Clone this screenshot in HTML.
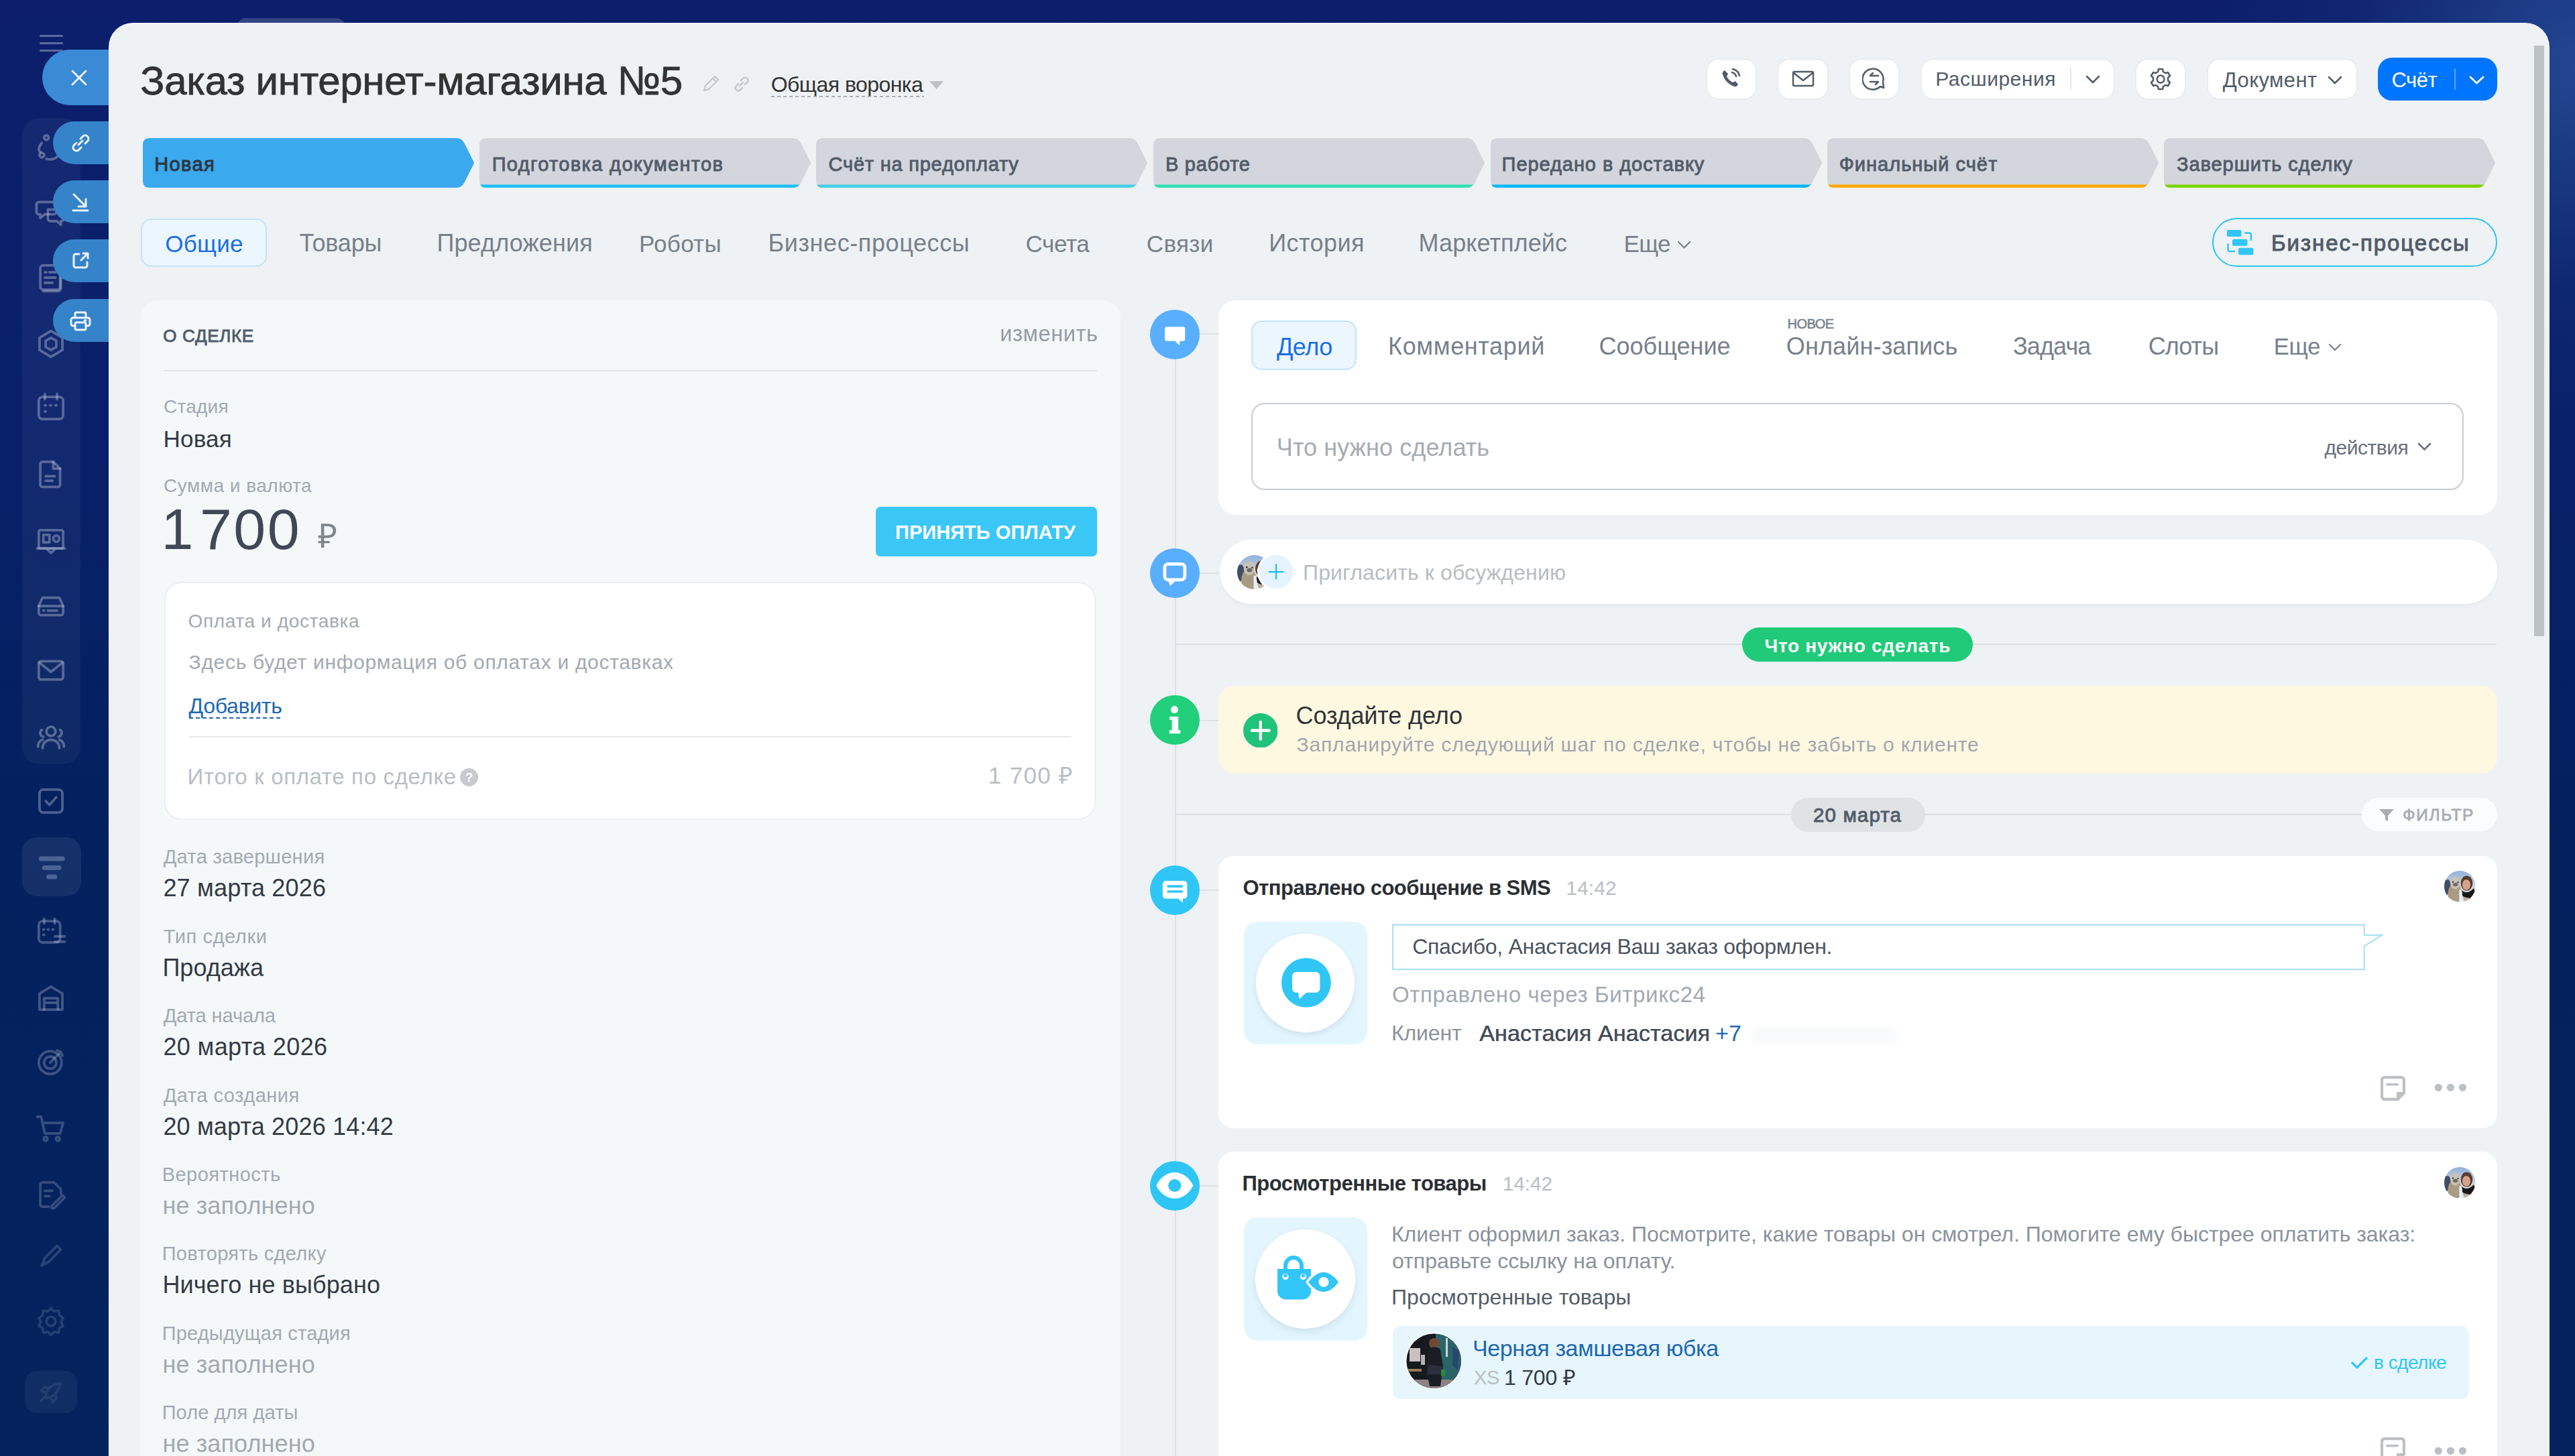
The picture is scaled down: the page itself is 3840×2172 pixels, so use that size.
<!DOCTYPE html>
<html><head><meta charset="utf-8"><style>
html,body{margin:0;padding:0;width:3840px;height:2172px;overflow:hidden;}
body{position:relative;font-family:"Liberation Sans", sans-serif;background:#0b1f6c;}
.t{position:absolute;white-space:pre;}
</style></head><body>
<div style="position:absolute;left:0.0px;top:0.0px;width:3840.0px;height:2172.0px;background:linear-gradient(180deg,#0c1e6c 0%,#08206a 28%,#04215f 55%,#04235c 100%);"></div>
<div style="position:absolute;left:3000.0px;top:0.0px;width:840.0px;height:1000.0px;background:radial-gradient(ellipse 560px 560px at 100% 10%,rgba(60,110,180,0.5),rgba(40,80,150,0.15) 60%,rgba(0,0,0,0) 100%);"></div>
<div style="position:absolute;left:353.0px;top:27.0px;width:162.0px;height:33.0px;background:rgba(255,255,255,0.16);border-radius:14px 14px 0 0;"></div>
<div style="position:absolute;left:59.0px;top:51.5px;width:35.0px;height:3.0px;background:rgba(200,210,235,0.42);border-radius:2px;"></div>
<div style="position:absolute;left:59.0px;top:62.5px;width:35.0px;height:3.0px;background:rgba(200,210,235,0.42);border-radius:2px;"></div>
<div style="position:absolute;left:59.0px;top:73.5px;width:35.0px;height:3.0px;background:rgba(200,210,235,0.42);border-radius:2px;"></div>
<div style="position:absolute;left:33.0px;top:176.0px;width:87.0px;height:964.0px;background:rgba(255,255,255,0.045);border-radius:26px;"></div>
<div style="position:absolute;left:33.0px;top:1249.0px;width:87.5px;height:88.0px;background:rgba(255,255,255,0.07);border-radius:22px;"></div>
<div style="position:absolute;left:37.0px;top:2045.0px;width:78.0px;height:63.0px;background:rgba(255,255,255,0.05);border-radius:18px;"></div>
<svg style="position:absolute;left:51.0px;top:195.0px;" width="50.0" height="50.0" viewBox="-2 -2 44 44" fill="none"><g stroke="rgba(195,202,220,0.400)" stroke-width="3.3" stroke-linecap="round" stroke-linejoin="round" fill="none"><circle cx="14" cy="7" r="3"/><circle cx="8" cy="30" r="3"/><path d="M8 14 C3 20 4 24 6 26"/><path d="M14 35 C22 37 28 34 32 28"/></g></svg>
<svg style="position:absolute;left:51.0px;top:290.0px;" width="50.0" height="50.0" viewBox="-2 -2 44 44" fill="none"><g stroke="rgba(195,202,220,0.400)" stroke-width="3.3" stroke-linecap="round" stroke-linejoin="round" fill="none"><path d="M4 8 h20 a3 3 0 0 1 3 3 v10 a3 3 0 0 1-3 3 h-12 l-6 5 v-5 h-2 a3 3 0 0 1-3-3 v-10 a3 3 0 0 1 3-3z"/><path d="M16 18 h18 a3 3 0 0 1 3 3 v9 a3 3 0 0 1-3 3 h-1 v5 l-5-5 h-9 a3 3 0 0 1-3-3z"/></g></svg>
<svg style="position:absolute;left:51.0px;top:389.0px;" width="50.0" height="50.0" viewBox="-2 -2 44 44" fill="none"><g stroke="rgba(195,202,220,0.400)" stroke-width="3.3" stroke-linecap="round" stroke-linejoin="round" fill="none"><rect x="6" y="4" width="26" height="32" rx="4"/><path d="M12 13h2M18 13h8M12 20h14M12 27h10"/><path d="M33 12v22a4 4 0 0 1-4 4H10"/></g></svg>
<svg style="position:absolute;left:51.0px;top:488.0px;" width="50.0" height="50.0" viewBox="-2 -2 44 44" fill="none"><g stroke="rgba(195,202,220,0.400)" stroke-width="3.3" stroke-linecap="round" stroke-linejoin="round" fill="none"><path d="M20 3 L35 12 V28 L20 37 L5 28 V12Z"/><path d="M20 12 L27 16 V24 L20 28 L13 24 V16Z"/></g></svg>
<svg style="position:absolute;left:51.0px;top:582.0px;" width="50.0" height="50.0" viewBox="-2 -2 44 44" fill="none"><g stroke="rgba(195,202,220,0.400)" stroke-width="3.3" stroke-linecap="round" stroke-linejoin="round" fill="none"><rect x="4" y="7" width="32" height="29" rx="5"/><path d="M12 3v7M28 3v7"/><path d="M12 18h1M19 18h1M26 18h1M12 26h1"/></g></svg>
<svg style="position:absolute;left:51.0px;top:682.0px;" width="50.0" height="50.0" viewBox="-2 -2 44 44" fill="none"><g stroke="rgba(195,202,220,0.400)" stroke-width="3.3" stroke-linecap="round" stroke-linejoin="round" fill="none"><path d="M9 4h14l9 9v21a3 3 0 0 1-3 3H9a3 3 0 0 1-3-3V7a3 3 0 0 1 3-3z"/><path d="M23 4v9h9M13 23h12M13 29h9"/></g></svg>
<svg style="position:absolute;left:51.0px;top:783.0px;" width="50.0" height="50.0" viewBox="-2 -2 44 44" fill="none"><g stroke="rgba(195,202,220,0.400)" stroke-width="3.3" stroke-linecap="round" stroke-linejoin="round" fill="none"><rect x="4" y="5" width="32" height="24" rx="2"/><path d="M2 29h36M14 29l6 6 6-6"/><rect x="10" y="11" width="8" height="10"/><circle cx="27" cy="16" r="4"/></g></svg>
<svg style="position:absolute;left:51.0px;top:879.0px;" width="50.0" height="50.0" viewBox="-2 -2 44 44" fill="none"><g stroke="rgba(195,202,220,0.400)" stroke-width="3.3" stroke-linecap="round" stroke-linejoin="round" fill="none"><path d="M4 20 L9 9 h22 l5 11 v9 a3 3 0 0 1-3 3 H7 a3 3 0 0 1-3-3z"/><path d="M4 20h32M10 26h1M16 26h12"/></g></svg>
<svg style="position:absolute;left:51.0px;top:975.0px;" width="50.0" height="50.0" viewBox="-2 -2 44 44" fill="none"><g stroke="rgba(195,202,220,0.400)" stroke-width="3.3" stroke-linecap="round" stroke-linejoin="round" fill="none"><rect x="4" y="8" width="32" height="24" rx="3"/><path d="M5 10 L20 22 L35 10"/></g></svg>
<svg style="position:absolute;left:51.0px;top:1074.0px;" width="50.0" height="50.0" viewBox="-2 -2 44 44" fill="none"><g stroke="rgba(195,202,220,0.400)" stroke-width="3.3" stroke-linecap="round" stroke-linejoin="round" fill="none"><circle cx="20" cy="13" r="6"/><path d="M9 35c0-7 5-11 11-11s11 4 11 11"/><path d="M10 20a5 5 0 0 1-2-9M30 20a5 5 0 0 0 2-9M3 33c0-5 3-8 6-9M37 33c0-5-3-8-6-9"/></g></svg>
<svg style="position:absolute;left:51.0px;top:1170.0px;" width="50.0" height="50.0" viewBox="-2 -2 44 44" fill="none"><g stroke="rgba(195,202,220,0.380)" stroke-width="3.3" stroke-linecap="round" stroke-linejoin="round" fill="none"><rect x="5" y="5" width="30" height="30" rx="5"/><path d="M13 20l5 5 9-10"/></g></svg>
<svg style="position:absolute;left:54.0px;top:1271.0px;" width="44.0" height="44.0" viewBox="-2 -2 44 44" fill="none"><path d="M5.2 8 H37.3 M10.3 21.6 H32.2 M16.5 35 H26" stroke="rgba(150,170,210,0.42)" stroke-width="7" stroke-linecap="round" fill="none"/></svg>
<svg style="position:absolute;left:51.0px;top:1365.0px;" width="50.0" height="50.0" viewBox="-2 -2 44 44" fill="none"><g stroke="rgba(195,202,220,0.340)" stroke-width="3.3" stroke-linecap="round" stroke-linejoin="round" fill="none"><rect x="4" y="6" width="28" height="28" rx="5"/><path d="M11 3v6M25 3v6M10 17h1M16 17h1M22 17h1M10 24h1M25 26h13M25 33h13"/></g></svg>
<svg style="position:absolute;left:51.0px;top:1464.0px;" width="50.0" height="50.0" viewBox="-2 -2 44 44" fill="none"><g stroke="rgba(195,202,220,0.320)" stroke-width="3.3" stroke-linecap="round" stroke-linejoin="round" fill="none"><path d="M5 14 L20 5 L35 14 V35 H5Z"/><path d="M11 35V20h18v15M11 26h18"/></g></svg>
<svg style="position:absolute;left:51.0px;top:1559.0px;" width="50.0" height="50.0" viewBox="-2 -2 44 44" fill="none"><g stroke="rgba(195,202,220,0.300)" stroke-width="3.3" stroke-linecap="round" stroke-linejoin="round" fill="none"><circle cx="19" cy="21" r="15"/><circle cx="19" cy="21" r="8"/><path d="M19 21 L33 7M28 5l5 2 2 5"/></g></svg>
<svg style="position:absolute;left:51.0px;top:1658.0px;" width="50.0" height="50.0" viewBox="-2 -2 44 44" fill="none"><g stroke="rgba(195,202,220,0.280)" stroke-width="3.3" stroke-linecap="round" stroke-linejoin="round" fill="none"><path d="M2 5h5l5 22h20l4-14H10"/><circle cx="13" cy="34" r="2.5"/><circle cx="29" cy="34" r="2.5"/></g></svg>
<svg style="position:absolute;left:51.0px;top:1757.0px;" width="50.0" height="50.0" viewBox="-2 -2 44 44" fill="none"><g stroke="rgba(195,202,220,0.260)" stroke-width="3.3" stroke-linecap="round" stroke-linejoin="round" fill="none"><path d="M24 4H9a3 3 0 0 0-3 3v26a3 3 0 0 0 3 3h8M24 4l9 9v6M12 15h10M12 22h6"/><path d="M21 35l14-14 3 3-14 14h-3z"/></g></svg>
<svg style="position:absolute;left:51.0px;top:1847.0px;" width="50.0" height="50.0" viewBox="-2 -2 44 44" fill="none"><g stroke="rgba(195,202,220,0.200)" stroke-width="3.3" stroke-linecap="round" stroke-linejoin="round" fill="none"><path d="M8 34 L12 24 L28 8 L33 13 L17 29 Z"/></g></svg>
<svg style="position:absolute;left:51.0px;top:1946.0px;" width="50.0" height="50.0" viewBox="-2 -2 44 44" fill="none"><g stroke="rgba(195,202,220,0.180)" stroke-width="3.3" stroke-linecap="round" stroke-linejoin="round" fill="none"><circle cx="20" cy="20" r="6"/><path d="M20 3l4 4 6-1 1 6 5 4-3 5 3 5-5 3-1 6-6-1-4 4-4-4-6 1-1-6-5-3 3-5-3-5 5-4 1-6 6 1z"/></g></svg>
<svg style="position:absolute;left:51.0px;top:2052.0px;" width="50.0" height="50.0" viewBox="-2 -2 44 44" fill="none"><g stroke="rgba(195,202,220,0.100)" stroke-width="3.3" stroke-linecap="round" stroke-linejoin="round" fill="none"><path d="M14 28c-3-8 4-18 18-20-2 14-12 21-20 18zM12 26l-5 5M18 14l-6-1-5 5 5 2M26 22l1 6-5 5-2-5"/></g></svg>
<div style="position:absolute;left:63.0px;top:74.0px;width:137.0px;height:83.0px;background:#3a8ad5;border-radius:42px 0 0 42px;"></div>
<svg style="position:absolute;left:106.0px;top:104.0px;" width="24.0" height="24.0" viewBox="0 0 24 24" fill="none"><path d="M2 2L22 22M22 2L2 22" stroke="#fff" stroke-width="2.6" stroke-linecap="round"/></svg>
<div style="position:absolute;left:79.0px;top:181.0px;width:121.0px;height:64.0px;background:#3583c9;border-radius:32px 0 0 32px;"></div>
<div style="position:absolute;left:79.0px;top:269.0px;width:121.0px;height:64.0px;background:#3583c9;border-radius:32px 0 0 32px;"></div>
<div style="position:absolute;left:79.0px;top:357.0px;width:121.0px;height:64.0px;background:#3583c9;border-radius:32px 0 0 32px;"></div>
<div style="position:absolute;left:79.0px;top:446.0px;width:121.0px;height:64.0px;background:#3583c9;border-radius:32px 0 0 32px;"></div>
<svg style="position:absolute;left:104.0px;top:197.0px;" width="32.0" height="32.0" viewBox="0 0 32 32" fill="none"><g stroke="#eef4fb" stroke-width="3" stroke-linecap="round" stroke-linejoin="round" fill="none"><path d="M13 19 L19 13"/><path d="M10 16 L6 20 a5 5 0 0 0 7 7 L17 23"/><path d="M16 10 L20 6 a5 5 0 0 1 7 7 L23 17"/></g></svg>
<svg style="position:absolute;left:104.0px;top:285.0px;" width="32.0" height="32.0" viewBox="0 0 32 32" fill="none"><g stroke="#eef4fb" stroke-width="3" stroke-linecap="round" stroke-linejoin="round" fill="none"><path d="M6 5 L24 23 M24 12 V23 H13 M5 29 H27"/></g></svg>
<svg style="position:absolute;left:104.0px;top:373.0px;" width="32.0" height="32.0" viewBox="0 0 32 32" fill="none"><g stroke="#eef4fb" stroke-width="3" stroke-linecap="round" stroke-linejoin="round" fill="none"><path d="M14 6 H9 a3 3 0 0 0-3 3 V23 a3 3 0 0 0 3 3 H23 a3 3 0 0 0 3-3 V18"/><path d="M17 15 L27 5 M20 5 H27 V12"/></g></svg>
<svg style="position:absolute;left:103.0px;top:462.0px;" width="34.0" height="34.0" viewBox="0 0 34 34" fill="none"><g stroke="#eef4fb" stroke-width="3" stroke-linecap="round" stroke-linejoin="round" fill="none"><path d="M9 12 V6 a2 2 0 0 1 2-2 H23 a2 2 0 0 1 2 2 V12"/><path d="M9 24 H6 a3 3 0 0 1-3-3 V15 a3 3 0 0 1 3-3 H28 a3 3 0 0 1 3 3 V21 a3 3 0 0 1-3 3 H25"/><rect x="9" y="19" width="16" height="11" rx="2"/><path d="M23 16h2"/></g></svg>
<div style="position:absolute;left:162.0px;top:34.0px;width:3640.0px;height:2266.0px;background:#eef2f4;border-radius:36px 36px 0 0;"></div>
<div style="position:absolute;left:3779.0px;top:68.0px;width:15.0px;height:881.0px;background:#bdc2c5;"></div>
<div class="t" style="left:209.2px;top:91.4px;font-size:60px;line-height:60px;color:#333333;font-weight:400;letter-spacing:-0.28px;-webkit-text-stroke:0.8px #333333;">Заказ интернет-магазина №5</div>
<svg style="position:absolute;left:1046.0px;top:111.0px;" width="29.0" height="28.0" viewBox="0 0 29 28" fill="none"><g stroke="#c5c9ce" stroke-width="2.4" fill="none" stroke-linejoin="round"><path d="M4 24 L6 17 L20 3 L25 8 L11 22 Z M17 6 L22 11"/></g></svg>
<svg style="position:absolute;left:1091.0px;top:111.0px;" width="29.0" height="28.0" viewBox="0 0 29 28" fill="none"><g stroke="#c5c9ce" stroke-width="2.6" fill="none" stroke-linecap="round"><path d="M12 17 L17 12"/><path d="M10 14 L6 18 a4.5 4.5 0 0 0 6 6 L16 20"/><path d="M14 9 L18 5 a4.5 4.5 0 0 1 6 6 L20 15"/></g></svg>
<div class="t" style="left:1149.7px;top:110.3px;font-size:32px;line-height:32px;color:#333333;font-weight:400;letter-spacing:-0.56px;">Общая воронка</div>
<div style="position:absolute;left:1150.0px;top:143.0px;width:228.0px;height:2.0px;background-image:linear-gradient(90deg,#a8adb4 55%,transparent 55%);background-size:9px 2px;"></div>
<svg style="position:absolute;left:1386.0px;top:121.0px;" width="21.0" height="12.0" viewBox="0 0 21 12" fill="none"><path d="M0 0 H21 L10.5 12 Z" fill="#bdc1c6"/></svg>
<div style="position:absolute;left:2546.0px;top:88.5px;width:72.0px;height:58.5px;background:#fff;border-radius:17px;box-shadow:0 0 0 1.5px rgba(0,0,0,0.035);"></div>
<div style="position:absolute;left:2652.0px;top:88.5px;width:73.0px;height:58.5px;background:#fff;border-radius:17px;box-shadow:0 0 0 1.5px rgba(0,0,0,0.035);"></div>
<div style="position:absolute;left:2759.0px;top:88.5px;width:72.0px;height:58.5px;background:#fff;border-radius:17px;box-shadow:0 0 0 1.5px rgba(0,0,0,0.035);"></div>
<div style="position:absolute;left:2866.0px;top:88.5px;width:286.0px;height:58.5px;background:#fff;border-radius:17px;box-shadow:0 0 0 1.5px rgba(0,0,0,0.035);"></div>
<div style="position:absolute;left:3186.0px;top:88.5px;width:72.0px;height:58.5px;background:#fff;border-radius:17px;box-shadow:0 0 0 1.5px rgba(0,0,0,0.035);"></div>
<div style="position:absolute;left:3293.0px;top:88.5px;width:221.0px;height:58.5px;background:#fff;border-radius:17px;box-shadow:0 0 0 1.5px rgba(0,0,0,0.035);"></div>
<div style="position:absolute;left:3546.0px;top:85.5px;width:178.0px;height:64.5px;background:#0075ff;border-radius:21px;"></div>
<svg style="position:absolute;left:2566.0px;top:102.0px;" width="30.0" height="30.0" viewBox="0 0 30 30" fill="none"><path d="M6 3 C4 4 2 6 3 9 C5 17 12 24 20 27 C23 28 25 26 26 24 L22 19 L18 21 C14 19 11 16 9 12 L11 8 Z" fill="#525c69"/><g stroke="#525c69" stroke-width="2.5" fill="none" stroke-linecap="round" stroke-linejoin="round"><path d="M17 6 a8 8 0 0 1 6 6 M18 1 a13 13 0 0 1 10 10"/></g></svg>
<svg style="position:absolute;left:2672.0px;top:105.0px;" width="34.0" height="25.0" viewBox="0 0 34 25" fill="none"><g stroke="#525c69" stroke-width="2.5" fill="none" stroke-linecap="round" stroke-linejoin="round"><rect x="2" y="2" width="30" height="21" rx="2"/><path d="M3 4 L17 15 L31 4"/></g></svg>
<svg style="position:absolute;left:2777.0px;top:100.0px;" width="36.0" height="36.0" viewBox="0 0 36 36" fill="none"><g stroke="#525c69" stroke-width="2.5" fill="none" stroke-linecap="round" stroke-linejoin="round"><path d="M32 31 L27 29 A15.5 15.5 0 1 1 31 22 Z"/><path d="M24 13 H12 L16 9 M12 22 H24 L20 26"/></g></svg>
<div class="t" style="left:2886.3px;top:103.0px;font-size:30px;line-height:30px;color:#525c69;font-weight:400;letter-spacing:0.52px;">Расширения</div>
<div style="position:absolute;left:3086.5px;top:102.0px;width:2.0px;height:32.0px;background:#e3e6e9;"></div>
<svg style="position:absolute;left:3110.0px;top:112.0px;" width="22.0" height="14.0" viewBox="0 0 22 14" fill="none"><g stroke="#525c69" stroke-width="2.5" fill="none" stroke-linecap="round" stroke-linejoin="round" stroke-width="2.6"><path d="M2 2 L11 11 L20 2"/></g></svg>
<svg style="position:absolute;left:3203.0px;top:100.0px;" width="38.0" height="36.0" viewBox="0 0 38 36" fill="none"><g stroke="#525c69" stroke-width="2.5" fill="none" stroke-linecap="round" stroke-linejoin="round"><circle cx="19" cy="18" r="5.5"/><path d="M16 3 h6 l1 4 3 2 4-1 3 5 -3 3 v4 l3 3 -3 5 -4-1 -3 2 -1 4 h-6 l-1-4 -3-2 -4 1 -3-5 3-3 v-4 l-3-3 3-5 4 1 3-2z"/></g></svg>
<div class="t" style="left:3314.8px;top:103.5px;font-size:31px;line-height:31px;color:#525c69;font-weight:400;letter-spacing:0.41px;">Документ</div>
<svg style="position:absolute;left:3471.0px;top:113.0px;" width="22.0" height="14.0" viewBox="0 0 22 14" fill="none"><g stroke="#525c69" stroke-width="2.5" fill="none" stroke-linecap="round" stroke-linejoin="round" stroke-width="2.6"><path d="M2 2 L11 11 L20 2"/></g></svg>
<div class="t" style="left:3566.5px;top:103.5px;font-size:31px;line-height:31px;color:#ffffff;font-weight:400;letter-spacing:-0.51px;">Счёт</div>
<div style="position:absolute;left:3659.5px;top:101.5px;width:2.0px;height:32.5px;background:rgba(255,255,255,0.35);"></div>
<svg style="position:absolute;left:3682.0px;top:113.0px;" width="23.0" height="14.0" viewBox="0 0 23 14" fill="none"><path d="M2 2 L11.5 11 L21 2" stroke="#fff" stroke-width="2.8" fill="none" stroke-linecap="round" stroke-linejoin="round"/></svg>
<svg style="position:absolute;left:213.3px;top:206.0px;" width="494.2" height="74.0" viewBox="0 0 494.2 74" fill="none"><path d="M0 10 Q0 0 10 0 H467.2 Q476.2 0 480.2 9 L494.2 37.0 L480.2 65 Q476.2 74 467.2 74 H10 Q0 74 0 64 Z" fill="#3ba9ee"/></svg>
<svg style="position:absolute;left:715.3px;top:206.0px;" width="494.2" height="74.0" viewBox="0 0 494.2 74" fill="none"><path d="M0 10 Q0 0 10 0 H467.2 Q476.2 0 480.2 9 L494.2 37.0 L480.2 65 Q476.2 74 467.2 74 H10 Q0 74 0 64 Z" fill="#d3d6dd"/><clipPath id="sc1"><path d="M0 10 Q0 0 10 0 H467.2 Q476.2 0 480.2 9 L494.2 37.0 L480.2 65 Q476.2 74 467.2 74 H10 Q0 74 0 64 Z"/></clipPath><rect x="0" y="69.4" width="494.2" height="5" fill="#1ec0f4" clip-path="url(#sc1)"/></svg>
<svg style="position:absolute;left:1217.0px;top:206.0px;" width="494.2" height="74.0" viewBox="0 0 494.2 74" fill="none"><path d="M0 10 Q0 0 10 0 H467.2 Q476.2 0 480.2 9 L494.2 37.0 L480.2 65 Q476.2 74 467.2 74 H10 Q0 74 0 64 Z" fill="#d3d6dd"/><clipPath id="sc2"><path d="M0 10 Q0 0 10 0 H467.2 Q476.2 0 480.2 9 L494.2 37.0 L480.2 65 Q476.2 74 467.2 74 H10 Q0 74 0 64 Z"/></clipPath><rect x="0" y="69.4" width="494.2" height="5" fill="#46cfe3" clip-path="url(#sc2)"/></svg>
<svg style="position:absolute;left:1719.6px;top:206.0px;" width="494.2" height="74.0" viewBox="0 0 494.2 74" fill="none"><path d="M0 10 Q0 0 10 0 H467.2 Q476.2 0 480.2 9 L494.2 37.0 L480.2 65 Q476.2 74 467.2 74 H10 Q0 74 0 64 Z" fill="#d3d6dd"/><clipPath id="sc3"><path d="M0 10 Q0 0 10 0 H467.2 Q476.2 0 480.2 9 L494.2 37.0 L480.2 65 Q476.2 74 467.2 74 H10 Q0 74 0 64 Z"/></clipPath><rect x="0" y="69.4" width="494.2" height="5" fill="#2fe1b4" clip-path="url(#sc3)"/></svg>
<svg style="position:absolute;left:2223.0px;top:206.0px;" width="494.2" height="74.0" viewBox="0 0 494.2 74" fill="none"><path d="M0 10 Q0 0 10 0 H467.2 Q476.2 0 480.2 9 L494.2 37.0 L480.2 65 Q476.2 74 467.2 74 H10 Q0 74 0 64 Z" fill="#d3d6dd"/><clipPath id="sc4"><path d="M0 10 Q0 0 10 0 H467.2 Q476.2 0 480.2 9 L494.2 37.0 L480.2 65 Q476.2 74 467.2 74 H10 Q0 74 0 64 Z"/></clipPath><rect x="0" y="69.4" width="494.2" height="5" fill="#00b6f7" clip-path="url(#sc4)"/></svg>
<svg style="position:absolute;left:2725.0px;top:206.0px;" width="494.2" height="74.0" viewBox="0 0 494.2 74" fill="none"><path d="M0 10 Q0 0 10 0 H467.2 Q476.2 0 480.2 9 L494.2 37.0 L480.2 65 Q476.2 74 467.2 74 H10 Q0 74 0 64 Z" fill="#d3d6dd"/><clipPath id="sc5"><path d="M0 10 Q0 0 10 0 H467.2 Q476.2 0 480.2 9 L494.2 37.0 L480.2 65 Q476.2 74 467.2 74 H10 Q0 74 0 64 Z"/></clipPath><rect x="0" y="69.4" width="494.2" height="5" fill="#ffa800" clip-path="url(#sc5)"/></svg>
<svg style="position:absolute;left:3226.6px;top:206.0px;" width="494.2" height="74.0" viewBox="0 0 494.2 74" fill="none"><path d="M0 10 Q0 0 10 0 H467.2 Q476.2 0 480.2 9 L494.2 37.0 L480.2 65 Q476.2 74 467.2 74 H10 Q0 74 0 64 Z" fill="#d3d6dd"/><clipPath id="sc6"><path d="M0 10 Q0 0 10 0 H467.2 Q476.2 0 480.2 9 L494.2 37.0 L480.2 65 Q476.2 74 467.2 74 H10 Q0 74 0 64 Z"/></clipPath><rect x="0" y="69.4" width="494.2" height="5" fill="#7bd400" clip-path="url(#sc6)"/></svg>
<div class="t" style="left:230.3px;top:230.6px;font-size:29px;line-height:29px;color:#2b3540;font-weight:400;letter-spacing:1.35px;-webkit-text-stroke:0.9px #2b3540;">Новая</div>
<div class="t" style="left:733.7px;top:230.6px;font-size:29px;line-height:29px;color:#525c69;font-weight:400;letter-spacing:1.34px;-webkit-text-stroke:0.9px #525c69;">Подготовка документов</div>
<div class="t" style="left:1235.6px;top:230.6px;font-size:29px;line-height:29px;color:#525c69;font-weight:400;letter-spacing:0.78px;-webkit-text-stroke:0.9px #525c69;">Счёт на предоплату</div>
<div class="t" style="left:1738.0px;top:230.6px;font-size:29px;line-height:29px;color:#525c69;font-weight:400;letter-spacing:0.73px;-webkit-text-stroke:0.9px #525c69;">В работе</div>
<div class="t" style="left:2239.6px;top:230.6px;font-size:29px;line-height:29px;color:#525c69;font-weight:400;letter-spacing:0.94px;-webkit-text-stroke:0.9px #525c69;">Передано в доставку</div>
<div class="t" style="left:2742.8px;top:230.6px;font-size:29px;line-height:29px;color:#525c69;font-weight:400;letter-spacing:1.02px;-webkit-text-stroke:0.9px #525c69;">Финальный счёт</div>
<div class="t" style="left:3246.0px;top:230.6px;font-size:29px;line-height:29px;color:#525c69;font-weight:400;letter-spacing:0.93px;-webkit-text-stroke:0.9px #525c69;">Завершить сделку</div>
<div style="position:absolute;left:210.0px;top:325.6px;width:188.0px;height:72.4px;background:#ecf6fe;border:2px solid #c3e3fa;border-radius:16px;box-sizing:border-box;"></div>
<div class="t" style="left:246.3px;top:345.9px;font-size:35px;line-height:35px;color:#1b6fe4;font-weight:400;letter-spacing:0.27px;">Общие</div>
<div class="t" style="left:446.4px;top:345.0px;font-size:36px;line-height:36px;color:#77808b;font-weight:400;letter-spacing:-0.15px;">Товары</div>
<div class="t" style="left:651.4px;top:345.0px;font-size:36px;line-height:36px;color:#77808b;font-weight:400;letter-spacing:0.16px;">Предложения</div>
<div class="t" style="left:953.0px;top:345.9px;font-size:35px;line-height:35px;color:#77808b;font-weight:400;letter-spacing:0.27px;">Роботы</div>
<div class="t" style="left:1145.6px;top:345.0px;font-size:36px;line-height:36px;color:#77808b;font-weight:400;letter-spacing:0.59px;">Бизнес-процессы</div>
<div class="t" style="left:1529.6px;top:345.9px;font-size:35px;line-height:35px;color:#77808b;font-weight:400;letter-spacing:-0.36px;">Счета</div>
<div class="t" style="left:1709.8px;top:345.9px;font-size:35px;line-height:35px;color:#77808b;font-weight:400;letter-spacing:0.36px;">Связи</div>
<div class="t" style="left:1892.2px;top:345.0px;font-size:36px;line-height:36px;color:#77808b;font-weight:400;letter-spacing:0.45px;">История</div>
<div class="t" style="left:2115.6px;top:345.0px;font-size:36px;line-height:36px;color:#77808b;font-weight:400;letter-spacing:0.09px;">Маркетплейс</div>
<div class="t" style="left:2421.5px;top:345.9px;font-size:35px;line-height:35px;color:#77808b;font-weight:400;letter-spacing:-0.62px;">Еще</div>
<svg style="position:absolute;left:2501.0px;top:359.0px;" width="21.0" height="13.0" viewBox="0 0 21 13" fill="none"><path d="M2 2 L10.5 10.5 L19 2" stroke="#77808b" stroke-width="2.2" fill="none" stroke-linecap="round"/></svg>
<div style="position:absolute;left:3298.8px;top:324.8px;width:425.1px;height:73.2px;border:2.2px solid #2ec4f5;border-radius:40px;box-sizing:border-box;"></div>
<svg style="position:absolute;left:3320.0px;top:342.0px;" width="41.0" height="39.0" viewBox="0 0 41 39" fill="none"><g fill="#31c5f6"><rect x="0.7" y="1" width="21.8" height="10" rx="2.5"/><rect x="9" y="14.8" width="22.5" height="10" rx="2.5"/><rect x="18" y="27.8" width="22.4" height="10.4" rx="2.5"/></g><g stroke="#31c5f6" stroke-width="2.6" fill="none"><path d="M27 5.5 H34 a3 3 0 0 1 3 3 V17"/><path d="M2.5 21.5 V30 a3 3 0 0 0 3 3 H13"/></g></svg>
<div class="t" style="left:3387.0px;top:345.5px;font-size:33px;line-height:33px;color:#525c69;font-weight:400;letter-spacing:1.95px;-webkit-text-stroke:1px #525c69;">Бизнес-процессы</div>
<div style="position:absolute;left:208.5px;top:447.7px;width:1462.5px;height:1852.3px;background:#f4f8f9;border-radius:26px;"></div>
<div class="t" style="left:243.3px;top:487.8px;font-size:26px;line-height:26px;color:#525c69;font-weight:400;letter-spacing:0.66px;-webkit-text-stroke:0.9px #525c69;">О СДЕЛКЕ</div>
<div class="t" style="left:1491.2px;top:482.3px;font-size:32.5px;line-height:32.5px;color:#959ca4;font-weight:400;letter-spacing:0.62px;">изменить</div>
<div style="position:absolute;left:244.0px;top:552.0px;width:1392.0px;height:2.0px;background:#e3e7ea;"></div>
<div class="t" style="left:244.0px;top:592.6px;font-size:28px;line-height:28px;color:#a3a9b1;font-weight:400;letter-spacing:0.22px;">Стадия</div>
<div class="t" style="left:243.6px;top:636.8px;font-size:35px;line-height:35px;color:#333a44;font-weight:400;letter-spacing:0.17px;">Новая</div>
<div class="t" style="left:244.0px;top:711.1px;font-size:28px;line-height:28px;color:#a3a9b1;font-weight:400;letter-spacing:0.50px;">Сумма и валюта</div>
<div class="t" style="left:240.6px;top:745.5px;font-size:86px;line-height:86px;color:#414855;font-weight:400;letter-spacing:0.00px;">1</div>
<div class="t" style="left:298.0px;top:745.5px;font-size:86px;line-height:86px;color:#414855;font-weight:400;letter-spacing:2.52px;">700</div>
<div class="t" style="left:474.0px;top:774.7px;font-size:50px;line-height:50px;color:#80868e;font-weight:400;letter-spacing:0.00px;">₽</div>
<div style="position:absolute;left:1305.6px;top:756.2px;width:330.4px;height:73.4px;background:#3bc7f5;border-radius:7px;"></div>
<div class="t" style="left:1335.0px;top:780.0px;font-size:29px;line-height:29px;color:#ffffff;font-weight:700;letter-spacing:0.05px;">ПРИНЯТЬ ОПЛАТУ</div>
<div style="position:absolute;left:245.4px;top:868.0px;width:1388.6px;height:355.4px;background:#fff;border:2px solid #eceff2;border-radius:26px;box-sizing:border-box;"></div>
<div class="t" style="left:280.6px;top:913.1px;font-size:28px;line-height:28px;color:#a3a9b1;font-weight:400;letter-spacing:0.63px;">Оплата и доставка</div>
<div class="t" style="left:281.6px;top:972.6px;font-size:30px;line-height:30px;color:#a3a9b1;font-weight:400;letter-spacing:0.69px;">Здесь будет информация об оплатах и доставках</div>
<div class="t" style="left:281.6px;top:1036.7px;font-size:32px;line-height:32px;color:#2067b0;font-weight:400;letter-spacing:-0.31px;">Добавить</div>
<div style="position:absolute;left:281.6px;top:1070.0px;width:138.6px;height:2.0px;background-image:linear-gradient(90deg,#2067b0 60%,transparent 60%);background-size:10px 2px;"></div>
<div style="position:absolute;left:281.6px;top:1098.0px;width:1316.4px;height:2.0px;background:#e6e9ec;"></div>
<div class="t" style="left:279.6px;top:1141.9px;font-size:33px;line-height:33px;color:#b9bec4;font-weight:400;letter-spacing:0.66px;">Итого к оплате по сделке</div>
<svg style="position:absolute;left:686.0px;top:1146.0px;" width="27.0" height="27.0" viewBox="0 0 27 27" fill="none"><circle cx="13.5" cy="13.5" r="13.5" fill="#c6cacf"/><text x="13.5" y="20" text-anchor="middle" font-family="Liberation Sans" font-weight="700" font-size="19" fill="#fff">?</text></svg>
<div class="t" style="left:1473.8px;top:1139.0px;font-size:35px;line-height:35px;color:#b9bec4;font-weight:400;letter-spacing:1.32px;">1 700 ₽</div>
<div class="t" style="left:243.7px;top:1264.1px;font-size:29px;line-height:29px;color:#a3a9b1;font-weight:400;letter-spacing:0.29px;">Дата завершения</div>
<div class="t" style="left:243.4px;top:1307.2px;font-size:36px;line-height:36px;color:#333a44;font-weight:400;letter-spacing:0.20px;">27 марта 2026</div>
<div class="t" style="left:243.7px;top:1382.6px;font-size:29px;line-height:29px;color:#a3a9b1;font-weight:400;letter-spacing:0.60px;">Тип сделки</div>
<div class="t" style="left:242.4px;top:1425.7px;font-size:36px;line-height:36px;color:#333a44;font-weight:400;letter-spacing:0.06px;">Продажа</div>
<div class="t" style="left:243.7px;top:1501.0px;font-size:29px;line-height:29px;color:#a3a9b1;font-weight:400;letter-spacing:-0.08px;">Дата начала</div>
<div class="t" style="left:243.4px;top:1544.1px;font-size:36px;line-height:36px;color:#333a44;font-weight:400;letter-spacing:0.37px;">20 марта 2026</div>
<div class="t" style="left:243.7px;top:1619.5px;font-size:29px;line-height:29px;color:#a3a9b1;font-weight:400;letter-spacing:0.50px;">Дата создания</div>
<div class="t" style="left:243.4px;top:1662.5px;font-size:36px;line-height:36px;color:#333a44;font-weight:400;letter-spacing:0.17px;">20 марта 2026 14:42</div>
<div class="t" style="left:241.7px;top:1737.9px;font-size:29px;line-height:29px;color:#a3a9b1;font-weight:400;letter-spacing:0.47px;">Вероятность</div>
<div class="t" style="left:242.4px;top:1781.0px;font-size:36px;line-height:36px;color:#a3a9b1;font-weight:400;letter-spacing:0.12px;">не заполнено</div>
<div class="t" style="left:241.7px;top:1856.3px;font-size:29px;line-height:29px;color:#a3a9b1;font-weight:400;letter-spacing:0.33px;">Повторять сделку</div>
<div class="t" style="left:242.4px;top:1899.4px;font-size:36px;line-height:36px;color:#333a44;font-weight:400;letter-spacing:0.12px;">Ничего не выбрано</div>
<div class="t" style="left:241.7px;top:1974.8px;font-size:29px;line-height:29px;color:#a3a9b1;font-weight:400;letter-spacing:0.20px;">Предыдущая стадия</div>
<div class="t" style="left:242.4px;top:2017.9px;font-size:36px;line-height:36px;color:#a3a9b1;font-weight:400;letter-spacing:0.12px;">не заполнено</div>
<div class="t" style="left:241.7px;top:2093.2px;font-size:29px;line-height:29px;color:#a3a9b1;font-weight:400;letter-spacing:0.09px;">Поле для даты</div>
<div class="t" style="left:242.4px;top:2136.3px;font-size:36px;line-height:36px;color:#a3a9b1;font-weight:400;letter-spacing:0.12px;">не заполнено</div>
<div style="position:absolute;left:1752.0px;top:535.0px;width:2.0px;height:1765.0px;background:#dde1e5;"></div>
<div style="position:absolute;left:1788.0px;top:497.0px;width:29.0px;height:2.0px;background:#dde1e5;"></div>
<div style="position:absolute;left:1788.0px;top:854.0px;width:29.0px;height:2.0px;background:#dde1e5;"></div>
<div style="position:absolute;left:1788.0px;top:1073.5px;width:29.0px;height:2.0px;background:#dde1e5;"></div>
<div style="position:absolute;left:1788.0px;top:1326.5px;width:29.0px;height:2.0px;background:#dde1e5;"></div>
<div style="position:absolute;left:1788.0px;top:1767.5px;width:29.0px;height:2.0px;background:#dde1e5;"></div>
<div style="position:absolute;left:1753.0px;top:960.0px;width:1970.0px;height:2.0px;background:#dde1e5;"></div>
<div style="position:absolute;left:1753.0px;top:1214.0px;width:1970.0px;height:2.0px;background:#dde1e5;"></div>
<svg style="position:absolute;left:1714.8px;top:461.7px;" width="74.0" height="74.0" viewBox="0 0 74 74" fill="none"><circle cx="37" cy="37" r="37" fill="#59affe"/><path d="M25 25.4 H49.2 a3 3 0 0 1 3 3 V43.7 a3 3 0 0 1-3 3 H44.2 V53.2 L37.2 46.7 H25 a3 3 0 0 1-3-3 V28.4 a3 3 0 0 1 3-3Z" fill="#fff"/></svg>
<svg style="position:absolute;left:1714.8px;top:818.2px;" width="74.0" height="74.0" viewBox="0 0 74 74" fill="none"><circle cx="37" cy="37" r="37" fill="#59affe"/><rect x="21.9" y="23.4" width="29.9" height="23.4" rx="5" fill="none" stroke="#fff" stroke-width="4.8"/><path d="M27 48.5 L30.2 56 L38 48.5 Z" fill="#fff"/></svg>
<svg style="position:absolute;left:1714.8px;top:1036.7px;" width="74.0" height="74.0" viewBox="0 0 74 74" fill="none"><circle cx="37" cy="37" r="37" fill="#22cf7b"/><circle cx="36.4" cy="21.6" r="5.5" fill="#fff"/><path d="M29.2 31.9 H42.2 V52.2 H45.2 V57.3 H28.8 V52.2 H32.6 V36.8 H29.2Z" fill="#fff"/></svg>
<svg style="position:absolute;left:1714.8px;top:1290.6px;" width="74.0" height="74.0" viewBox="0 0 74 74" fill="none"><circle cx="37" cy="37" r="37" fill="#2fc6f6"/><path d="M23.8 23 H50.4 a5 5 0 0 1 5 5 V44.6 a5 5 0 0 1-5 5 H49 V55.5 L42 49.6 H23.8 a5 5 0 0 1-5-5 V28 a5 5 0 0 1 5-5Z" fill="#fff"/><path d="M27 31.1 H47.5 M27 39 H47.5" stroke="#2fc6f6" stroke-width="3.6" stroke-linecap="round"/></svg>
<svg style="position:absolute;left:1714.8px;top:1731.8px;" width="74.0" height="74.0" viewBox="0 0 74 74" fill="none"><circle cx="37" cy="37" r="37" fill="#2fc6f6"/><path d="M9.2 36.5 C22 10.5 51.5 10.5 64.4 36.5 C51.5 62.5 22 62.5 9.2 36.5Z" fill="#fff"/><circle cx="36.8" cy="36.5" r="9.6" fill="#2fc6f6"/></svg>
<div style="position:absolute;left:1816.5px;top:447.7px;width:1907.5px;height:320.7px;background:#fff;border-radius:26px;"></div>
<div style="position:absolute;left:1866.2px;top:478.0px;width:157.3px;height:73.8px;background:#ecf6fe;border:2px solid #c3e3fa;border-radius:16px;box-sizing:border-box;"></div>
<div class="t" style="left:1903.9px;top:500.0px;font-size:36px;line-height:36px;color:#1b6fe4;font-weight:400;letter-spacing:-0.44px;">Дело</div>
<div class="t" style="left:2070.0px;top:499.0px;font-size:36px;line-height:36px;color:#77808b;font-weight:400;letter-spacing:0.66px;">Комментарий</div>
<div class="t" style="left:2384.4px;top:499.0px;font-size:36px;line-height:36px;color:#77808b;font-weight:400;letter-spacing:0.03px;">Сообщение</div>
<div class="t" style="left:2665.5px;top:472.8px;font-size:20px;line-height:20px;color:#7a838e;font-weight:400;letter-spacing:-0.48px;-webkit-text-stroke:0.6px #7a838e;">НОВОЕ</div>
<div class="t" style="left:2663.8px;top:499.0px;font-size:36px;line-height:36px;color:#77808b;font-weight:400;letter-spacing:0.14px;">Онлайн-запись</div>
<div class="t" style="left:3002.0px;top:499.0px;font-size:36px;line-height:36px;color:#77808b;font-weight:400;letter-spacing:-0.89px;">Задача</div>
<div class="t" style="left:3203.7px;top:499.0px;font-size:36px;line-height:36px;color:#77808b;font-weight:400;letter-spacing:-0.91px;">Слоты</div>
<div class="t" style="left:3390.7px;top:500.3px;font-size:34.5px;line-height:34.5px;color:#77808b;font-weight:400;letter-spacing:-0.20px;">Еще</div>
<svg style="position:absolute;left:3472.0px;top:512.0px;" width="20.0" height="14.0" viewBox="0 0 20 14" fill="none"><path d="M2 2 L10 10 L18 2" stroke="#77808b" stroke-width="2.2" fill="none" stroke-linecap="round"/></svg>
<div style="position:absolute;left:1866.2px;top:601.4px;width:1807.8px;height:129.8px;border:2px solid #c8cdd2;border-radius:20px;box-sizing:border-box;"></div>
<div class="t" style="left:1903.8px;top:650.3px;font-size:36px;line-height:36px;color:#a6abb2;font-weight:400;letter-spacing:0.10px;">Что нужно сделать</div>
<div class="t" style="left:3466.6px;top:653.1px;font-size:30px;line-height:30px;color:#67707b;font-weight:400;letter-spacing:-0.51px;">действия</div>
<svg style="position:absolute;left:3605.0px;top:660.0px;" width="21.0" height="14.0" viewBox="0 0 21 14" fill="none"><path d="M2 2 L10.5 10.5 L19 2" stroke="#67707b" stroke-width="2.6" fill="none" stroke-linecap="round"/></svg>
<div style="position:absolute;left:1818.6px;top:805.0px;width:1905.4px;height:96.4px;background:#fff;border-radius:48px;box-shadow:0 3px 6px rgba(0,0,0,0.04);"></div>
<svg style="position:absolute;left:1844.6px;top:827.6px;" width="51.0" height="51.0" viewBox="0 0 100 100" fill="none"><defs><clipPath id="avc1"><circle cx="50" cy="50" r="50"/></clipPath><linearGradient id="avg1" x1="0" y1="0" x2="0" y2="1"><stop offset="0" stop-color="#8fb0dc"/><stop offset="0.55" stop-color="#cdd8e6"/><stop offset="1" stop-color="#e8eef5"/></linearGradient></defs><g clip-path="url(#avc1)"><rect width="100" height="100" fill="url(#avg1)"/><path d="M0 30 L14 28 L22 40 L20 75 L0 80Z" fill="#3f4d68"/><path d="M0 80 L20 72 L30 100 H0Z" fill="#d5deea"/><ellipse cx="34" cy="74" rx="22" ry="34" fill="#a99b82"/><ellipse cx="35" cy="38" rx="16" ry="21" fill="#c9c1b3"/><ellipse cx="36" cy="44" rx="8" ry="6" fill="#6f6a66"/><circle cx="28" cy="36" r="2.5" fill="#333"/><circle cx="44" cy="37" r="2.5" fill="#333"/><ellipse cx="72" cy="40" rx="19" ry="24" fill="#5b3a28"/><ellipse cx="71" cy="45" rx="13" ry="17" fill="#d7a28c"/><path d="M56 62 C64 72 82 72 94 56 L100 70 L100 82 C86 92 66 90 58 80Z" fill="#18181b"/><path d="M58 80 C70 90 90 88 100 78 L100 100 H64Z" fill="#bdae95"/><path d="M78 86 L100 80 L100 100 L84 100Z" fill="#2c2a28"/><path d="M48 60 L56 62 L60 100 L48 100Z" fill="#e6edf5"/></g></svg>
<svg style="position:absolute;left:1874.8px;top:825.0px;" width="56.2" height="56.2" viewBox="0 0 56.2 56.2" fill="none"><circle cx="28.1" cy="28.1" r="26.6" fill="#e4f3fd" stroke="#fff" stroke-width="3"/><path d="M28.1 17.4 V38.4 M17.6 28.1 H38.6" stroke="#18bdf1" stroke-width="2.2" stroke-linecap="round"/></svg>
<div class="t" style="left:1943.0px;top:837.6px;font-size:32px;line-height:32px;color:#b7bcc2;font-weight:400;letter-spacing:0.15px;">Пригласить к обсуждению</div>
<div style="position:absolute;left:2597.5px;top:936.4px;width:344.9px;height:50.6px;background:#20ca78;border-radius:26px;"></div>
<div class="t" style="left:2631.5px;top:950.3px;font-size:28px;line-height:28px;color:#ffffff;font-weight:700;letter-spacing:0.71px;">Что нужно сделать</div>
<div style="position:absolute;left:1817.0px;top:1023.0px;width:1907.0px;height:131.2px;background:#fff8e1;border-radius:24px;"></div>
<svg style="position:absolute;left:1853.7px;top:1063.7px;" width="51.6" height="51.6" viewBox="0 0 51.6 51.6" fill="none"><circle cx="25.8" cy="25.8" r="25.8" fill="#21c27a"/><path d="M25.8 13 V38.6 M13 25.8 H38.6" stroke="#fff" stroke-width="4.4" stroke-linecap="round"/></svg>
<div class="t" style="left:1932.6px;top:1049.5px;font-size:36px;line-height:36px;color:#2f3338;font-weight:400;letter-spacing:-0.12px;">Создайте дело</div>
<div class="t" style="left:1933.6px;top:1096.2px;font-size:30px;line-height:30px;color:#a0a7af;font-weight:400;letter-spacing:0.82px;">Запланируйте следующий шаг по сделке, чтобы не забыть о клиенте</div>
<div style="position:absolute;left:2671.0px;top:1190.0px;width:200.0px;height:51.0px;background:#dfe3e6;border-radius:26px;"></div>
<div class="t" style="left:2704.0px;top:1200.5px;font-size:29.5px;line-height:29.5px;color:#525c69;font-weight:400;letter-spacing:1.14px;-webkit-text-stroke:0.9px #525c69;">20 марта</div>
<div style="position:absolute;left:3521.5px;top:1190.0px;width:202.5px;height:50.0px;background:#fbfcfd;border-radius:26px;"></div>
<svg style="position:absolute;left:3547.0px;top:1206.0px;" width="24.0" height="20.0" viewBox="0 0 24 20" fill="none"><path d="M1 1 H23 L14 11 V19 L10 17 V11Z" fill="#a8adb4"/></svg>
<div class="t" style="left:3583.0px;top:1203.8px;font-size:24.5px;line-height:24.5px;color:#a8adb4;font-weight:400;letter-spacing:1.62px;-webkit-text-stroke:0.8px #a8adb4;">ФИЛЬТР</div>
<div style="position:absolute;left:1817.0px;top:1276.7px;width:1907.0px;height:406.3px;background:#fff;border-radius:22px;"></div>
<div class="t" style="left:1853.5px;top:1309.2px;font-size:31px;line-height:31px;color:#2b2f33;font-weight:700;letter-spacing:-0.50px;">Отправлено сообщение в SMS</div>
<div class="t" style="left:2335.3px;top:1310.0px;font-size:30px;line-height:30px;color:#b9bec4;font-weight:400;letter-spacing:0.08px;">14:42</div>
<svg style="position:absolute;left:3645.1px;top:1299.1px;" width="46.5" height="46.5" viewBox="0 0 100 100" fill="none"><defs><clipPath id="avc2"><circle cx="50" cy="50" r="50"/></clipPath><linearGradient id="avg2" x1="0" y1="0" x2="0" y2="1"><stop offset="0" stop-color="#8fb0dc"/><stop offset="0.55" stop-color="#cdd8e6"/><stop offset="1" stop-color="#e8eef5"/></linearGradient></defs><g clip-path="url(#avc2)"><rect width="100" height="100" fill="url(#avg2)"/><path d="M0 30 L14 28 L22 40 L20 75 L0 80Z" fill="#3f4d68"/><path d="M0 80 L20 72 L30 100 H0Z" fill="#d5deea"/><ellipse cx="34" cy="74" rx="22" ry="34" fill="#a99b82"/><ellipse cx="35" cy="38" rx="16" ry="21" fill="#c9c1b3"/><ellipse cx="36" cy="44" rx="8" ry="6" fill="#6f6a66"/><circle cx="28" cy="36" r="2.5" fill="#333"/><circle cx="44" cy="37" r="2.5" fill="#333"/><ellipse cx="72" cy="40" rx="19" ry="24" fill="#5b3a28"/><ellipse cx="71" cy="45" rx="13" ry="17" fill="#d7a28c"/><path d="M56 62 C64 72 82 72 94 56 L100 70 L100 82 C86 92 66 90 58 80Z" fill="#18181b"/><path d="M58 80 C70 90 90 88 100 78 L100 100 H64Z" fill="#bdae95"/><path d="M78 86 L100 80 L100 100 L84 100Z" fill="#2c2a28"/><path d="M48 60 L56 62 L60 100 L48 100Z" fill="#e6edf5"/></g></svg>
<div style="position:absolute;left:1854.5px;top:1374.6px;width:184.3px;height:183.4px;background:#e4f6fd;border-radius:20px;"></div>
<div style="position:absolute;left:1873.0px;top:1392.5px;width:147.0px;height:147.0px;background:#fff;border-radius:50%;box-shadow:0 4px 10px rgba(0,60,90,0.10);"></div>
<svg style="position:absolute;left:1910.8px;top:1429.0px;" width="73.8" height="73.8" viewBox="0 0 73.8 73.8" fill="none"><circle cx="36.9" cy="36.9" r="36.9" fill="#2fc6f6"/><path d="M22 20.9 H51.4 a6 6 0 0 1 6 6 V45.8 a6 6 0 0 1-6 6 H37.2 L26.6 61.3 L25 51.8 H22 a6 6 0 0 1-6-6 V26.9 a6 6 0 0 1 6-6Z" fill="#fff"/></svg>
<svg style="position:absolute;left:2076.0px;top:1377.6px;" width="1480.0" height="70.4" viewBox="0 0 1480 70.4" fill="none"><path d="M1 1.7 H1449.8 V16.9 H1476.2 L1449.8 33.4 V68.1 H1 Z" fill="#fff" stroke="#aee0f4" stroke-width="2.2" stroke-linejoin="miter"/></svg>
<div class="t" style="left:2106.3px;top:1396.4px;font-size:32px;line-height:32px;color:#4a535e;font-weight:400;letter-spacing:-0.31px;">Спасибо, Анастасия Ваш заказ оформлен.</div>
<div class="t" style="left:2076.0px;top:1466.5px;font-size:33px;line-height:33px;color:#a3a9b0;font-weight:400;letter-spacing:0.63px;">Отправлено через Битрикс24</div>
<div class="t" style="left:2075.0px;top:1525.2px;font-size:32px;line-height:32px;color:#8a929b;font-weight:400;letter-spacing:-0.13px;">Клиент</div>
<div class="t" style="left:2206.0px;top:1523.5px;font-size:34px;line-height:34px;color:#454d58;font-weight:400;letter-spacing:0.15px;text-shadow:0.4px 0 0 #454d58;">Анастасия Анастасия</div>
<div class="t" style="left:2558.0px;top:1523.5px;font-size:34px;line-height:34px;color:#2067b0;font-weight:400;letter-spacing:0.14px;">+7</div>
<div style="position:absolute;left:2612.0px;top:1532.0px;width:218.0px;height:24.0px;background:rgba(200,208,220,0.13);border-radius:12px;filter:blur(4px);"></div>
<svg style="position:absolute;left:3550.0px;top:1604.5px;" width="37.0" height="37.0" viewBox="0 0 37 37" fill="none"><g stroke="#bcc0c5" stroke-width="4.2" fill="none" stroke-linejoin="round"><path d="M6.2 2.1 H30.8 a4.2 4.2 0 0 1 4.2 4.2 V25.5 L25.5 34.9 H6.2 a4.2 4.2 0 0 1 -4.2 -4.2 V6.3 a4.2 4.2 0 0 1 4.2-4.2Z"/></g><path d="M24 24 H35.5 L25.5 35.5 H24Z" fill="#bcc0c5"/><path d="M9.8 12.8 H25.5" stroke="#bcc0c5" stroke-width="3.4" stroke-linecap="round"/></svg>
<svg style="position:absolute;left:3628.0px;top:1612.0px;" width="52.0" height="20.0" viewBox="0 0 52 20" fill="none"><g fill="#bcc0c5"><circle cx="8.3" cy="10.3" r="5.6"/><circle cx="26.4" cy="10.3" r="5.6"/><circle cx="44.4" cy="10.3" r="5.6"/></g></svg>
<div style="position:absolute;left:1817.0px;top:1717.5px;width:1907.0px;height:582.5px;background:#fff;border-radius:22px;"></div>
<div class="t" style="left:1852.5px;top:1750.4px;font-size:31px;line-height:31px;color:#2b2f33;font-weight:700;letter-spacing:-0.48px;">Просмотренные товары</div>
<div class="t" style="left:2240.7px;top:1751.2px;font-size:30px;line-height:30px;color:#b9bec4;font-weight:400;letter-spacing:-0.15px;">14:42</div>
<svg style="position:absolute;left:3645.1px;top:1740.5px;" width="46.5" height="46.5" viewBox="0 0 100 100" fill="none"><defs><clipPath id="avc3"><circle cx="50" cy="50" r="50"/></clipPath><linearGradient id="avg3" x1="0" y1="0" x2="0" y2="1"><stop offset="0" stop-color="#8fb0dc"/><stop offset="0.55" stop-color="#cdd8e6"/><stop offset="1" stop-color="#e8eef5"/></linearGradient></defs><g clip-path="url(#avc3)"><rect width="100" height="100" fill="url(#avg3)"/><path d="M0 30 L14 28 L22 40 L20 75 L0 80Z" fill="#3f4d68"/><path d="M0 80 L20 72 L30 100 H0Z" fill="#d5deea"/><ellipse cx="34" cy="74" rx="22" ry="34" fill="#a99b82"/><ellipse cx="35" cy="38" rx="16" ry="21" fill="#c9c1b3"/><ellipse cx="36" cy="44" rx="8" ry="6" fill="#6f6a66"/><circle cx="28" cy="36" r="2.5" fill="#333"/><circle cx="44" cy="37" r="2.5" fill="#333"/><ellipse cx="72" cy="40" rx="19" ry="24" fill="#5b3a28"/><ellipse cx="71" cy="45" rx="13" ry="17" fill="#d7a28c"/><path d="M56 62 C64 72 82 72 94 56 L100 70 L100 82 C86 92 66 90 58 80Z" fill="#18181b"/><path d="M58 80 C70 90 90 88 100 78 L100 100 H64Z" fill="#bdae95"/><path d="M78 86 L100 80 L100 100 L84 100Z" fill="#2c2a28"/><path d="M48 60 L56 62 L60 100 L48 100Z" fill="#e6edf5"/></g></svg>
<div style="position:absolute;left:1854.5px;top:1815.8px;width:184.3px;height:184.2px;background:#e4f6fd;border-radius:20px;"></div>
<div style="position:absolute;left:1872.0px;top:1834.0px;width:149.0px;height:148.4px;background:#fff;border-radius:50%;box-shadow:0 5px 12px rgba(0,70,100,0.10);"></div>
<svg style="position:absolute;left:1895.0px;top:1865.0px;" width="110.0" height="80.0" viewBox="0 0 110 80" fill="none"><g transform="translate(-1895,-1865)"><path d="M1917 1896 V1888 a12 12 0 0 1 24 0 V1896" stroke="#31c6f7" stroke-width="6" fill="none"/><path d="M1905 1893 H1955 V1926 a12.5 12.5 0 0 1 -12.5 12.5 H1917.5 a12.5 12.5 0 0 1 -12.5 -12.5 Z" fill="#31c6f7"/><circle cx="1917" cy="1904.5" r="4.6" fill="#fff"/><circle cx="1917" cy="1903" r="2.6" fill="#31c6f7"/><circle cx="1943.5" cy="1904.5" r="4.6" fill="#fff"/><circle cx="1943.5" cy="1903" r="2.6" fill="#31c6f7"/><path d="M1950 1912.5 Q1973.6 1880 1997.5 1912.5 Q1973.6 1945 1950 1912.5 Z" fill="#31c6f7" stroke="#fff" stroke-width="5" stroke-linejoin="round"/><path d="M1951 1912.5 Q1973.6 1883 1996.3 1912.5 Q1973.6 1942 1951 1912.5 Z" fill="#31c6f7"/><circle cx="1974" cy="1912.5" r="7.6" fill="#fff"/></g></svg>
<div class="t" style="left:2075.0px;top:1824.5px;font-size:32px;line-height:32px;color:#8a929b;font-weight:400;letter-spacing:-0.02px;">Клиент оформил заказ. Посмотрите, какие товары он смотрел. Помогите ему быстрее оплатить заказ:</div>
<div class="t" style="left:2076.0px;top:1865.3px;font-size:32px;line-height:32px;color:#8a929b;font-weight:400;letter-spacing:0.03px;">отправьте ссылку на оплату.</div>
<div class="t" style="left:2075.0px;top:1918.9px;font-size:32px;line-height:32px;color:#525c69;font-weight:400;letter-spacing:0.05px;">Просмотренные товары</div>
<div style="position:absolute;left:2077.0px;top:1978.0px;width:1605.0px;height:108.5px;background:#e6f6fc;border-radius:12px;"></div>
<svg style="position:absolute;left:2095.7px;top:1987.8px;" width="84.4" height="84.4" viewBox="0 0 84.4 84.4" fill="none"><defs><clipPath id="pc"><circle cx="42.2" cy="42.2" r="40.8"/></clipPath></defs><circle cx="42.2" cy="42.2" r="42.2" fill="#fff"/><g clip-path="url(#pc)"><rect width="85" height="85" fill="#16191e"/><rect x="45" width="40" height="85" fill="#2a6468"/><rect x="60" y="8" width="3" height="28" fill="#c9d4d6"/><path d="M70 20 L80 28 L78 55 L70 50Z" fill="#28466f"/><rect x="6" y="23" width="16" height="20" fill="#c9c1c1"/><rect x="23" y="33" width="6" height="15" fill="#b6b2b4"/><rect x="0" y="54" width="24" height="4" fill="#9a7a58"/><rect x="0" y="70" width="85" height="15" fill="#8d8486"/><circle cx="43" cy="16" r="8" fill="#6e4a35"/><path d="M33 26 C36 20 50 20 52 26 L56 50 L52 80 L36 80 L30 50Z" fill="#1b1d24"/><path d="M34 48 L55 50 L58 62 L32 62Z" fill="#2b2f3d"/><rect x="53" y="55" width="6" height="10" fill="#2e8a3a"/></g></svg>
<div class="t" style="left:2195.9px;top:1994.2px;font-size:34px;line-height:34px;color:#2067b0;font-weight:400;letter-spacing:-0.36px;">Черная замшевая юбка</div>
<div class="t" style="left:2198.0px;top:2041.4px;font-size:29px;line-height:29px;color:#b9bec4;font-weight:400;letter-spacing:-0.34px;">XS</div>
<div class="t" style="left:2243.0px;top:2038.9px;font-size:32px;line-height:32px;color:#333a44;font-weight:400;letter-spacing:-0.21px;">1 700 ₽</div>
<svg style="position:absolute;left:3506.0px;top:2024.0px;" width="25.0" height="18.0" viewBox="0 0 25 18" fill="none"><path d="M2 9 L9 16 L23 2" stroke="#2fc6f6" stroke-width="3.2" fill="none" stroke-linecap="round" stroke-linejoin="round"/></svg>
<div class="t" style="left:3540.0px;top:2019.3px;font-size:28px;line-height:28px;color:#2fc6f6;font-weight:400;letter-spacing:-0.51px;">в сделке</div>
<svg style="position:absolute;left:3550.0px;top:2143.5px;" width="37.0" height="37.0" viewBox="0 0 37 37" fill="none"><g stroke="#bcc0c5" stroke-width="4.2" fill="none" stroke-linejoin="round"><path d="M6.2 2.1 H30.8 a4.2 4.2 0 0 1 4.2 4.2 V25.5 L25.5 34.9 H6.2 a4.2 4.2 0 0 1 -4.2 -4.2 V6.3 a4.2 4.2 0 0 1 4.2-4.2Z"/></g><path d="M24 24 H35.5 L25.5 35.5 H24Z" fill="#bcc0c5"/><path d="M9.8 12.8 H25.5" stroke="#bcc0c5" stroke-width="3.4" stroke-linecap="round"/></svg>
<svg style="position:absolute;left:3628.0px;top:2154.0px;" width="52.0" height="20.0" viewBox="0 0 52 20" fill="none"><g fill="#bcc0c5"><circle cx="8.3" cy="10.3" r="5.6"/><circle cx="26.4" cy="10.3" r="5.6"/><circle cx="44.4" cy="10.3" r="5.6"/></g></svg>
</body></html>
